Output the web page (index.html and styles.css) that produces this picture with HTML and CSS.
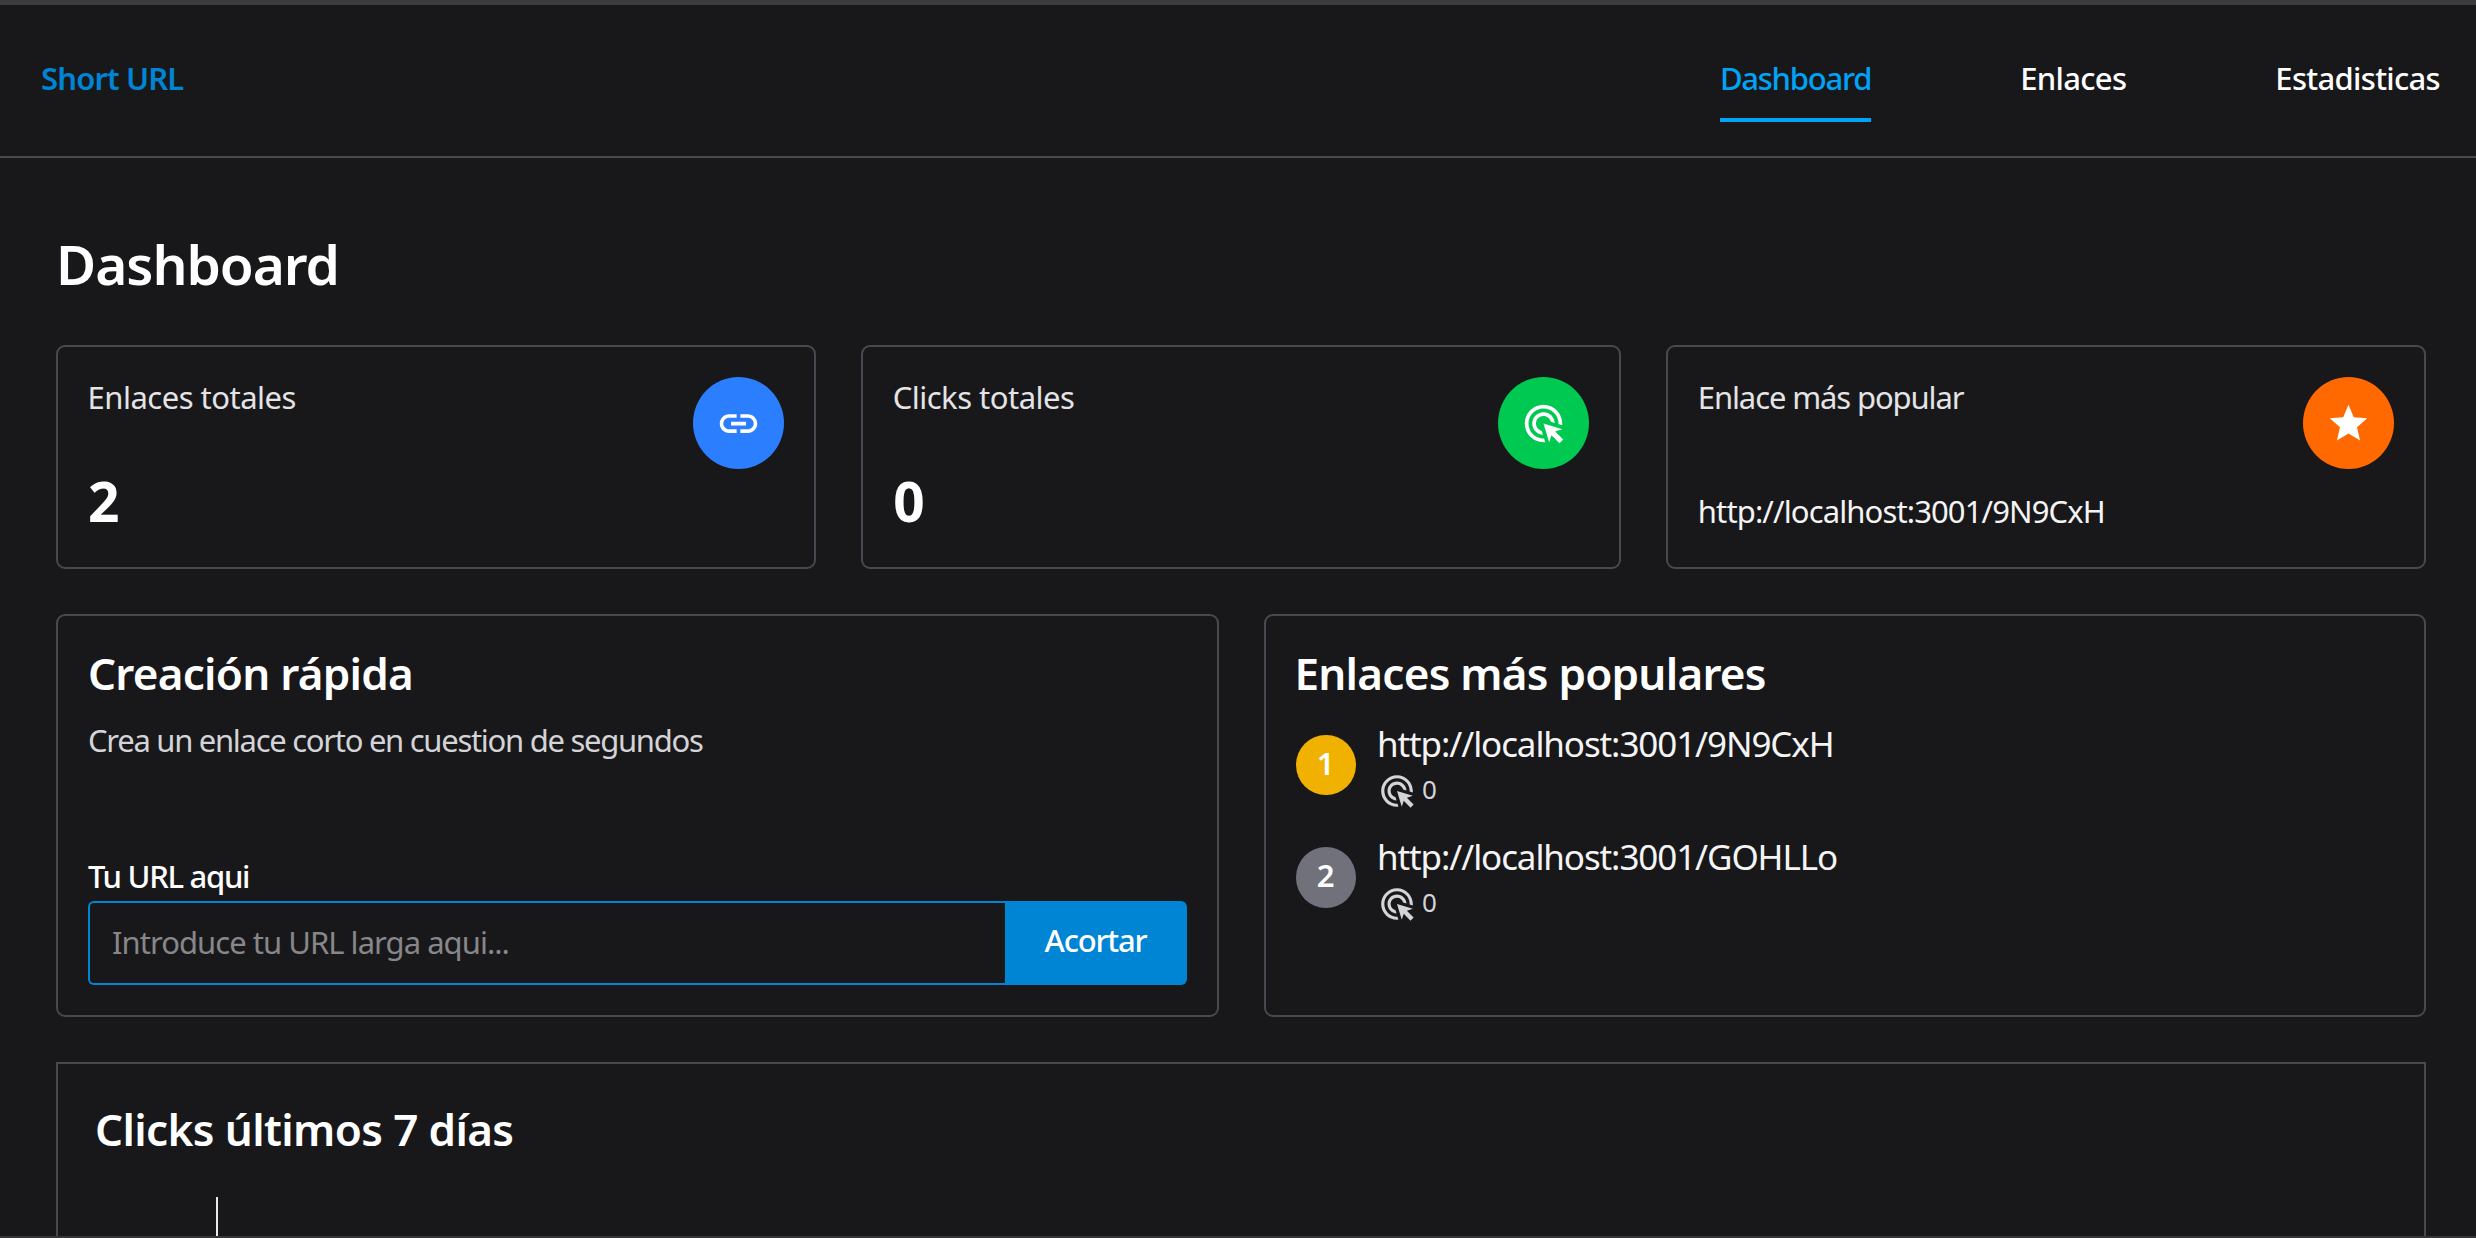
FILE: index.html
```
<!DOCTYPE html>
<html lang="es">
<head>
  <meta charset="utf-8">
  <title>Short URL</title>
  <link rel="stylesheet" href="styles.css">
</head>
<body>
  <svg class="sprite" aria-hidden="true">
    <symbol id="icon-link" viewBox="0 0 24 24"><path d="M3.9 12c0-1.71 1.39-3.1 3.1-3.1h4V7H7c-2.76 0-5 2.24-5 5s2.24 5 5 5h4v-1.9H7c-1.71 0-3.1-1.39-3.1-3.1zM8 13h8v-2H8v2zm9-6h-4v1.9h4c1.71 0 3.1 1.39 3.1 3.1s-1.39 3.1-3.1 3.1h-4V17h4c2.76 0 5-2.24 5-5s-2.24-5-5-5z"/></symbol>
    <symbol id="icon-click" viewBox="0 0 24 24"><path d="M11.71 17.99C8.53 17.84 6 15.22 6 12c0-3.31 2.69-6 6-6 3.22 0 5.84 2.53 5.99 5.71l-2.1-.63C15.48 9.31 13.89 8 12 8c-2.21 0-4 1.79-4 4 0 1.89 1.31 3.48 3.08 3.89l.63 2.1zM22 12c0 .3-.01.6-.04.9l-1.97-.59c.01-.1.01-.21.01-.31 0-4.42-3.58-8-8-8s-8 3.58-8 8 3.58 8 8 8c.1 0 .21 0 .31-.01l.59 1.97c-.3.03-.6.04-.9.04-5.52 0-10-4.48-10-10S6.48 2 12 2s10 4.48 10 10zm-3.77 4.26L22 15l-10-3 3 10 1.26-3.77 4.27 4.27 1.98-1.98-4.28-4.26z"/></symbol>
    <symbol id="icon-star" viewBox="0 0 24 24"><path d="M12 17.27L18.18 21l-1.64-7.03L22 9.24l-7.19-.61L12 2 9.19 8.63 2 9.24l5.46 4.73L5.82 21z"/></symbol>
  </svg>

  <header class="header">
    <a class="brand">Short URL</a>
    <nav class="nav">
      <a class="nav-link nav-link-active">Dashboard</a>
      <a class="nav-link">Enlaces</a>
      <a class="nav-link">Estadisticas</a>
    </nav>
  </header>

  <main class="main">
    <h1 class="title">Dashboard</h1>

    <section class="stats">
      <article class="card stat">
        <div>
          <p class="stat-label">Enlaces totales</p>
          <p class="stat-value">2</p>
        </div>
        <span class="badge badge-blue"><svg class="icon"><use href="#icon-link"/></svg></span>
      </article>
      <article class="card stat">
        <div>
          <p class="stat-label">Clicks totales</p>
          <p class="stat-value">0</p>
        </div>
        <span class="badge badge-green"><svg class="icon"><use href="#icon-click"/></svg></span>
      </article>
      <article class="card stat">
        <div>
          <p class="stat-label stat-label-popular">Enlace más popular</p>
          <p class="stat-url">http://localhost:3001/9N9CxH</p>
        </div>
        <span class="badge badge-orange"><svg class="icon"><use href="#icon-star"/></svg></span>
      </article>
    </section>

    <section class="panels">
      <article class="card panel">
        <h2 class="subtitle">Creación rápida</h2>
        <p class="description">Crea un enlace corto en cuestion de segundos</p>
        <form class="form">
          <label class="label" for="url">Tu URL aqui</label>
          <div class="field">
            <input class="input" id="url" type="text" placeholder="Introduce tu URL larga aqui...">
            <button class="button" type="button">Acortar</button>
          </div>
        </form>
      </article>

      <article class="card panel">
        <h2 class="subtitle subtitle-popular">Enlaces más populares</h2>
        <ol class="ranking">
          <li class="rank">
            <span class="rank-number rank-first">1</span>
            <div>
              <p class="rank-url">http://localhost:3001/9N9CxH</p>
              <p class="rank-clicks"><svg class="icon-small"><use href="#icon-click"/></svg><span class="rank-count">0</span></p>
            </div>
          </li>
          <li class="rank">
            <span class="rank-number">2</span>
            <div>
              <p class="rank-url">http://localhost:3001/GOHLLo</p>
              <p class="rank-clicks"><svg class="icon-small"><use href="#icon-click"/></svg><span class="rank-count">0</span></p>
            </div>
          </li>
        </ol>
      </article>
    </section>

    <section class="chart">
      <h2 class="subtitle chart-title">Clicks últimos 7 días</h2>
      <div class="plot"></div>
    </section>
  </main>
</body>
</html>
```
FILE: styles.css
```
* {
  box-sizing: border-box;
  margin: 0;
  padding: 0;
}

body {
  display: flex;
  flex-direction: column;
  height: 1238px;
  overflow: hidden;
  border-top: 5px solid #3b3b3b;
  border-bottom: 2px solid #363638;
  background: #18181a;
  color: #fff;
  font: 400 31px/46px "Noto Sans", "Open Sans", sans-serif;
}

.sprite {
  display: none;
}

.header {
  display: flex;
  flex: none;
  justify-content: space-between;
  align-items: flex-start;
  height: 153px;
  padding: 49px 36px 0 41px;
  border-bottom: 2px solid #484850;
  font-weight: 500;
  line-height: 48px;
}

.brand {
  color: #0084d4;
  font-weight: 600;
  letter-spacing: -0.85px;
}

.nav {
  display: flex;
  gap: 149px;
}

.nav-link {
  padding-bottom: 16px;
  letter-spacing: -0.68px;
}

.nav-link-active {
  border-bottom: 4px solid #00a3f5;
  color: #00a3f5;
  letter-spacing: -1.25px;
}

.main {
  display: flex;
  flex: 1;
  flex-direction: column;
  min-height: 0;
  padding: 66px 50px 0 56px;
}

.title {
  flex: none;
  margin: 0 0 41px;
  font-size: 55px;
  font-weight: 600;
  line-height: 80px;
  letter-spacing: -1.05px;
}

.stats {
  display: grid;
  flex: none;
  grid-template-columns: repeat(3, 1fr);
  gap: 45.5px;
  margin-bottom: 45px;
}

.card {
  padding: 30px;
  border: 2px solid #484850;
  border-radius: 9px;
}

.stat {
  display: flex;
  justify-content: space-between;
  height: 223.5px;
  padding-right: 29.7px;
}

.stat-label {
  margin: -3px 0 0 -0.5px;
  color: #e4e4e7;
  letter-spacing: -0.5px;
}

.stat-label-popular {
  letter-spacing: -1.12px;
}

.stat-value {
  margin-top: 50px;
  font-size: 55px;
  font-weight: 700;
  line-height: 62px;
}

.stat-url {
  margin-top: 68px;
  margin-left: -0.5px;
  color: #f4f4f5;
  letter-spacing: -0.88px;
}

.badge {
  display: grid;
  place-items: center;
  width: 91px;
  height: 92px;
  border-radius: 50%;
}

.badge-blue {
  background: #2b7fff;
}

.badge-green {
  background: #00c951;
}

.badge-orange {
  background: #ff6900;
}

.icon {
  width: 45px;
  height: 45px;
  margin-top: 1px;
  fill: #fff;
}

.panels {
  display: grid;
  flex: none;
  grid-template-columns: repeat(2, 1fr);
  gap: 45px;
  height: 403.5px;
  margin-bottom: 45px;
}

.panel {
  display: flex;
  flex-direction: column;
}

.subtitle {
  margin: -4px 0 0;
  font-size: 44px;
  font-weight: 600;
  line-height: 62px;
  letter-spacing: -0.75px;
}

.subtitle-popular {
  margin-left: -1px;
}

.description {
  margin-top: 13.5px;
  color: #d4d4d8;
  letter-spacing: -1.29px;
}

.form {
  margin-top: auto;
}

.label {
  display: block;
  margin-bottom: 2px;
  font-weight: 500;
  letter-spacing: -1.28px;
}

.field {
  display: flex;
  height: 84px;
}

.input {
  flex: 1;
  padding: 0 22px 3px;
  border: 2px solid #0084d4;
  border-right: 0;
  border-radius: 6px 0 0 6px;
  background: transparent;
  color: #fff;
  font: inherit;
  letter-spacing: -0.97px;
}

.input::placeholder {
  color: #87878a;
}

.button {
  width: 182px;
  padding-bottom: 6px;
  border: 0;
  border-radius: 0 6px 6px 0;
  background: #0084d4;
  color: #fff;
  font: inherit;
  font-weight: 500;
  letter-spacing: -1.2px;
}

.ranking {
  display: grid;
  gap: 18.5px;
  margin-top: 14.5px;
  list-style: none;
}

.rank {
  display: flex;
  align-items: center;
  gap: 21.5px;
}

.rank-number {
  width: 60px;
  height: 60.5px;
  border-radius: 50%;
  background: #71717b;
  font-weight: 600;
  line-height: 56px;
  text-align: center;
}

.rank-first {
  background: #f0b100;
}

.rank-url {
  color: #f4f4f5;
  font-size: 35px;
  line-height: 52px;
  letter-spacing: -1.1px;
}

.rank-clicks {
  display: flex;
  gap: 6px;
  height: 42px;
  padding-left: 1px;
  color: #d4d4d8;
  font-size: 26px;
  line-height: 38px;
}

.icon-small {
  width: 38px;
  height: 38px;
  margin-top: 2px;
  fill: #d4d4d8;
}

.chart {
  flex: 1;
  min-height: 0;
  padding: 34px 36px 0 37px;
  border: 2px solid #484850;
  border-bottom: 0;
  overflow: hidden;
}

.chart-title {
  margin: 0;
  letter-spacing: -0.62px;
}

.plot {
  height: 40px;
  margin: 37px 0 0 121px;
  border-left: 2px solid #e8e8e8;
}
```
